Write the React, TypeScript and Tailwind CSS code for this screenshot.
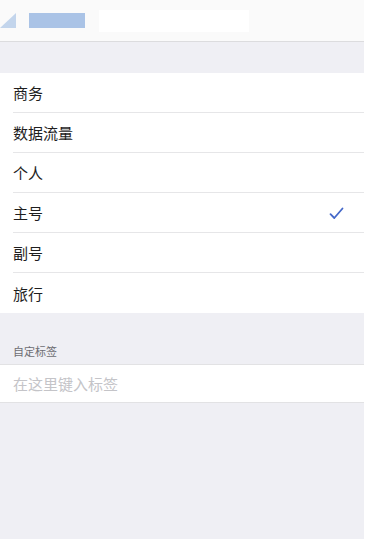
const ITEMS = ["商务", "数据流量", "个人", "主号", "副号", "旅行"];
const SELECTED = "主号";

function Check() {
  return (
    <svg width="15" height="13" viewBox="0 0 15 13" fill="none" className="text-[#4468c9]">
      <path d="M1.5 7.2 L5.3 11 L13.5 1.5" stroke="currentColor" strokeWidth="1.8" strokeLinecap="round" strokeLinejoin="round" />
    </svg>
  );
}

export default function App() {
  return (
    <div className="flex h-[539px] w-[373px] bg-white font-['Noto_Sans_CJK_SC',sans-serif]">
      <div className="flex w-[364px] flex-col bg-[#efeff4]">
        <div className="flex h-[42px] items-center gap-[14px] border-b border-[#dcdcde] bg-[#fafafa]">
          <div className="flex items-center gap-[13px]">
            <div className="h-[15px] w-[16px] bg-[#c3d5ec] [clip-path:polygon(100%_0,100%_100%,0_100%)]" />
            <div className="h-[15px] w-[56px] bg-[#aac3e6]" />
          </div>
          <div className="h-[22px] w-[150px] bg-white" />
        </div>

        <div className="h-[31px]" />

        <ul className="bg-white">
          {ITEMS.map((item, i) => (
            <li key={item} className="flex h-[40px] pl-[13px]">
              <div
                className={
                  "flex flex-1 items-center justify-between pr-[20px] pt-[2px] text-[15px] text-[#1e1e1e]" +
                  (i < ITEMS.length - 1 ? " border-b border-[#e6e6e8]" : "")
                }
              >
                <span>{item}</span>
                {item === SELECTED && <Check />}
              </div>
            </li>
          ))}
        </ul>

        <div className="h-[51px] px-[13px] pt-[30px] text-[11px] leading-[16px] text-[#6d6d72]">自定标签</div>

        <div className="flex h-[39px] items-center border-y border-[#e2e2e4] bg-white pl-[13px] pt-[1px] text-[15px] text-[#c4c4c8]">
          在这里键入标签
        </div>

        <div className="flex-1" />
      </div>
    </div>
  );
}
